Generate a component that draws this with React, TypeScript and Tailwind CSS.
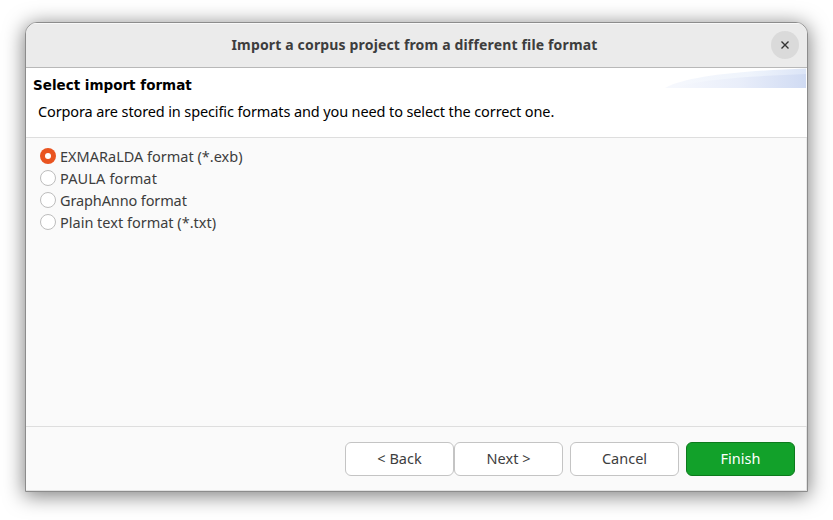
import React from "react";

const formats = [
  { label: "EXMARaLDA format (*.exb)", tracking: "tracking-[0px]" },
  { label: "PAULA format", tracking: "tracking-[0.15px]" },
  { label: "GraphAnno format", tracking: "tracking-[-0.12px]" },
  { label: "Plain text format (*.txt)", tracking: "tracking-[0px]" },
];

const button =
  "flex h-[34px] w-[109px] items-center justify-center rounded-[6px] border pb-[2px] text-[14.5px] leading-5 whitespace-nowrap";

export default function App() {
  const [selected, setSelected] = React.useState(0);
  return (
    <div className="h-[520px] w-[833px] overflow-hidden bg-white pl-[25px] pt-[22px] font-['Noto_Sans',sans-serif] text-[#3d3d3d]">
      <div className="flex h-[470px] w-[783px] flex-col overflow-hidden rounded-t-[12px] border border-[#8c8c8c] bg-[#fafafa] shadow-[0_3px_20px_1px_rgba(0,0,0,0.5)]">
        <header className="flex h-[45px] shrink-0 items-center border-b border-[#b8b8b8] bg-[#ebebeb] pr-2 shadow-[inset_0_1px_0_#f8f8f8]">
          <h1 className="flex-1 pl-[32px] text-center text-[14px] font-bold leading-5 tracking-[0.16px] whitespace-nowrap">
            Import a corpus project from a different file format
          </h1>
          <button aria-label="Close" className="flex size-7 items-center justify-center rounded-full bg-[#dadada]">
            <svg viewBox="0 0 8 8" className="size-2" fill="none" stroke="#333" strokeWidth="1.4">
              <path d="M0.5 0.5 7.5 7.5M7.5 0.5 0.5 7.5" />
            </svg>
          </button>
        </header>

        <section className="flex h-[70px] shrink-0 justify-between border-b border-[#dedede] bg-white text-black">
          <div className="pl-[7px] pt-[7px]">
            <h2 className="font-['DejaVu_Sans',sans-serif] text-[13.5px] font-bold leading-5 whitespace-nowrap">
              Select import format
            </h2>
            <p className="pl-[5px] pt-[6px] text-[14.5px] leading-5 tracking-[-0.12px] whitespace-nowrap">
              Corpora are stored in specific formats and you need to select the correct one.
            </p>
          </div>
          <svg viewBox="0 0 141 20" className="mr-px h-5 w-[141px] shrink-0">
            <defs>
              <linearGradient id="outer" x1="0" x2="1">
                <stop offset="0" stopColor="#f6f8fd" />
                <stop offset="0.6" stopColor="#eff4fc" />
                <stop offset="1" stopColor="#dce5f7" />
              </linearGradient>
              <linearGradient id="inner" x1="0" x2="1">
                <stop offset="0" stopColor="#f6f8fd" />
                <stop offset="0.5" stopColor="#e9eefa" />
                <stop offset="1" stopColor="#d0dbf3" />
              </linearGradient>
            </defs>
            <path d="M0 20C22 8 76 3 141 0.5V20Z" fill="url(#outer)" />
            <path d="M7 20C36 11 90 8 141 6V20Z" fill="url(#inner)" />
          </svg>
        </section>

        <main className="flex flex-1 flex-col pl-[14px] pt-[7px] shadow-[inset_-1px_0_0_#ececec]">
          {formats.map((f, i) => (
            <label key={f.label} className="flex h-[22px] items-center gap-1 text-[14.5px] leading-5">
              <input type="radio" name="format" className="sr-only" checked={selected === i} onChange={() => setSelected(i)} />
              <i
                className={
                  selected === i
                    ? "flex size-4 items-center justify-center rounded-full bg-[#e95420]"
                    : "size-4 rounded-full border border-[#bdbdbd] bg-white"
                }
              >
                {selected === i && <b className="size-[6px] rounded-full bg-white" />}
              </i>
              <span className={f.tracking}>{f.label}</span>
            </label>
          ))}
        </main>

        <footer className="flex h-[65px] shrink-0 border-t border-[#dedede] pl-[319px] pt-[15px] shadow-[inset_-1px_-1px_0_#e2e2e2]">
          <button className={`${button} border-[#c4c4c4] bg-white`}>&lt; Back</button>
          <button className={`${button} border-[#c4c4c4] bg-white`}>Next &gt;</button>
          <button className={`${button} ml-[7px] border-[#c4c4c4] bg-white`}>Cancel</button>
          <button className={`${button} ml-[7px] border-[#0c7a1c] bg-[#12a12a] text-white`}>Finish</button>
        </footer>
      </div>
    </div>
  );
}
